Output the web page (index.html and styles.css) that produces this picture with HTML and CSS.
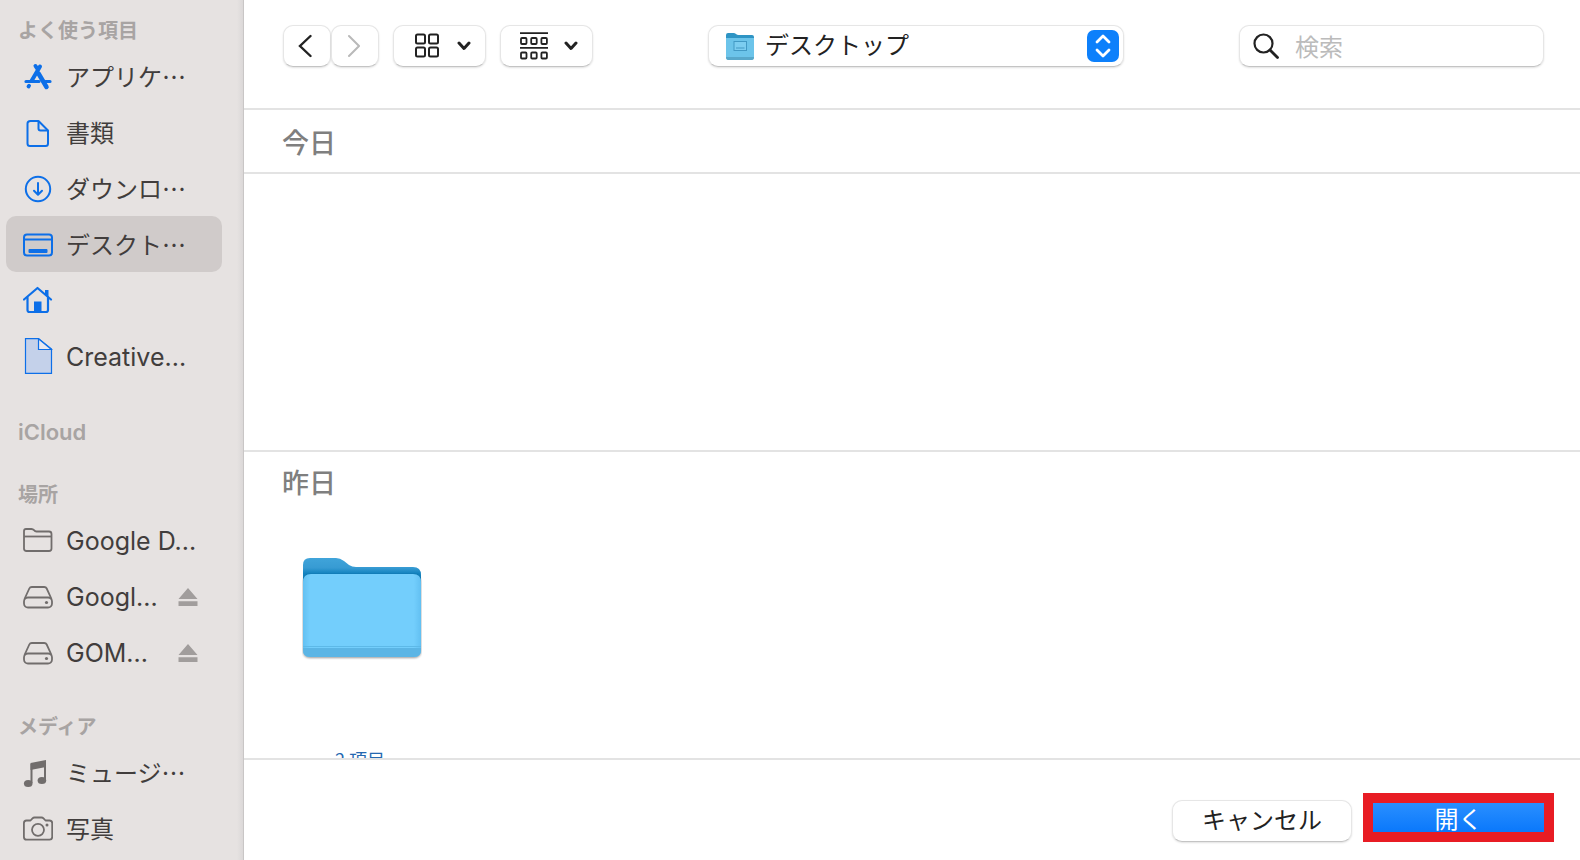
FILE: index.html
```html
<!doctype html>
<html lang="ja">
<head>
	<meta charset="UTF-8">
	<meta name="viewport" content="width=device-width, initial-scale=1">
	<title>デスクトップ</title>
	<link rel="stylesheet" href="styles.css">
</head>
<body>
	<div class="dialog">
		<nav class="sidebar">
			<h2>よく使う項目</h2>
			<ul>
				<li>
					<a href="#">
						<svg class="icon blue" viewBox="0 0 30 36"><g fill="none" stroke="currentColor" stroke-width="4" stroke-linecap="round"><path d="M17 8.500L8.500 23M12.500 8l2 3"/><path d="M15.500 15.500L23.500 29" stroke-width="4.500"/><path d="M3 23.500H16M22.500 23.500h4.500" stroke-width="3.200"/><path d="M5.500 28.500l.6-.8" stroke-width="3.800"/></g></svg>
						<span>アプリケ…</span>
					</a>
				</li>
				<li>
					<a href="#">
						<svg class="icon blue" viewBox="0 0 30 36"><g fill="none" stroke="currentColor" stroke-width="2" stroke-linejoin="round"><path d="M7.500 7H15.500L25 16.500V29.500Q25 32 22.500 32H7Q4.500 32 4.500 29.500V9.500Q4.500 7 7.500 7Z"/><path d="M15.500 7V14.500Q15.500 16.500 17.500 16.500H25"/></g></svg>
						<span>書類</span>
					</a>
				</li>
				<li>
					<a href="#">
						<svg class="icon blue" viewBox="0 0 30 36"><g fill="none" stroke="currentColor" stroke-width="2" stroke-linecap="round" stroke-linejoin="round"><circle cx="15" cy="19" r="12.200"/><path d="M15 13V24.500M11 20.800L15 24.800L19 20.800"/></g></svg>
						<span>ダウンロ…</span>
					</a>
				</li>
				<li>
					<a class="current" href="#">
						<svg class="icon blue" viewBox="0 0 30 36"><g fill="none" stroke="currentColor" stroke-width="2"><rect x="1" y="8.500" width="28" height="21" rx="3"/><path d="M1 13.500H29"/></g><rect x="5.500" y="23" width="19" height="4" rx="1" fill="currentColor"/></svg>
						<span>デスクト…</span>
					</a>
				</li>
				<li>
					<a href="#" aria-label="ホーム">
						<svg class="icon blue" viewBox="0 0 30 36"><g fill="none" stroke="currentColor" stroke-width="2.200" stroke-linejoin="round" stroke-linecap="round"><path d="M1 17.500L14.500 6L28 17.500"/><path d="M4.500 15.500V28Q4.500 30 6.500 30H23Q25 30 25 28V15.500"/></g><path d="M22 8H25.500V15L22 12Z" fill="currentColor"/><path d="M11 30V19.500H18.500V30Z" fill="currentColor"/></svg>
					</a>
				</li>
				<li>
					<a class="latin" href="#">
						<svg class="icon blue" viewBox="0 0 30 36"><path d="M2.500 .7H15.500L28.500 11V35.300H2.500Z" fill="#c4d1ea" stroke="currentColor" stroke-width="1.200"/><path d="M15.500 .7V11.500H28.500Z" fill="#e6e8f0" stroke="currentColor" stroke-width="1.200"/></svg>
						<span>Creative...</span>
					</a>
				</li>
			</ul>
			<h2 class="latin">iCloud</h2>
			<h2>場所</h2>
			<ul>
				<li>
					<a class="latin" href="#">
						<svg class="icon" viewBox="0 0 30 36"><g fill="none" stroke="currentColor" stroke-width="1.800" stroke-linejoin="round"><path d="M1 27V9Q1 7 3 7H8.500Q10 7 11 8.200T13.500 9.500H26Q28.500 9.500 28.500 12V26.500Q28.500 29 26 29H3.500Q1 29 1 26.500Z"/><path d="M1 14.500H28.500"/></g></svg>
						<span>Google D...</span>
					</a>
				</li>
				<li>
					<a class="latin" href="#">
						<svg class="icon" viewBox="0 0 30 36"><g fill="none" stroke="currentColor" stroke-width="1.800" stroke-linejoin="round"><path d="M1.500 21L6.300 10.500Q7 9 8.800 9H21.200Q23 9 23.700 10.500L28.500 21"/><rect x="1" y="19.500" width="28" height="10" rx="4"/></g><circle cx="23.500" cy="24.500" r="1.600" fill="currentColor"/></svg>
						<span>Googl...</span>
					</a>
					<button class="eject" type="button" aria-label="取り出す"><svg viewBox="0 0 20 20"><path d="M10 1L19.500 12H.5ZM.5 14.200H19.500V19H.5Z" fill="currentColor"/></svg></button>
				</li>
				<li>
					<a class="latin" href="#">
						<svg class="icon" viewBox="0 0 30 36"><g fill="none" stroke="currentColor" stroke-width="1.800" stroke-linejoin="round"><path d="M1.500 21L6.300 10.500Q7 9 8.800 9H21.200Q23 9 23.700 10.500L28.500 21"/><rect x="1" y="19.500" width="28" height="10" rx="4"/></g><circle cx="23.500" cy="24.500" r="1.600" fill="currentColor"/></svg>
						<span>GOM...</span>
					</a>
					<button class="eject" type="button" aria-label="取り出す"><svg viewBox="0 0 20 20"><path d="M10 1L19.500 12H.5ZM.5 14.200H19.500V19H.5Z" fill="currentColor"/></svg></button>
				</li>
			</ul>
			<h2>メディア</h2>
			<ul>
				<li>
					<a href="#">
						<svg class="icon" viewBox="0 0 30 36"><path d="M7.500 9L23 6V13L7.500 16Z" fill="currentColor"/><path d="M8.500 10V29M22 7V26" fill="none" stroke="currentColor" stroke-width="2"/><ellipse cx="5.200" cy="29.500" rx="4.300" ry="3.500" fill="currentColor"/><ellipse cx="18.900" cy="26.500" rx="4.300" ry="3.500" fill="currentColor"/></svg>
						<span>ミュージ…</span>
					</a>
				</li>
				<li>
					<a href="#">
						<svg class="icon" viewBox="0 0 30 36"><g fill="none" stroke="currentColor" stroke-width="1.800" stroke-linejoin="round"><path d="M3.500 10.500H7.500L9.500 8.300Q10.300 7.500 11.500 7.500H18.500Q19.700 7.500 20.500 8.300L22.500 10.500H26.500Q29.200 10.500 29.200 13.200V27Q29.200 29.700 26.500 29.700H3.500Q.9 29.700 .9 27V13.200Q.9 10.500 3.500 10.500Z"/><circle cx="15" cy="19.800" r="6"/></g><circle cx="24" cy="15" r="1.500" fill="currentColor"/></svg>
						<span>写真</span>
					</a>
				</li>
			</ul>
		</nav>
		<main class="content">
			<header class="toolbar">
				<div class="tools">
					<div class="history">
						<button class="control" type="button" aria-label="戻る"><svg viewBox="0 0 14 24"><path d="M12.500 2L2 12L12.500 22" fill="none" stroke="#222" stroke-width="2.400" stroke-linecap="round"/></svg></button>
						<button class="control" type="button" aria-label="進む" disabled><svg viewBox="0 0 14 24"><path d="M3 2L13 12L3 22" fill="none" stroke="#b9b9b9" stroke-width="2" stroke-linecap="round"/></svg></button>
					</div>
					<button class="control view" type="button" aria-label="アイコン表示">
						<svg viewBox="0 0 28 28"><g fill="none" stroke="#222" stroke-width="2"><rect x="3" y="2.500" width="9" height="9" rx="1.500"/><rect x="16" y="2.500" width="9" height="9" rx="1.500"/><rect x="3" y="15.500" width="9" height="9" rx="1.500"/><rect x="16" y="15.500" width="9" height="9" rx="1.500"/></g></svg>
						<svg class="chevron" viewBox="0 0 14 10"><path d="M2 2L7 7.500L12 2" fill="none" stroke="#222" stroke-width="3" stroke-linecap="round" stroke-linejoin="round"/></svg>
					</button>
					<button class="control view" type="button" aria-label="グループ分け">
						<svg viewBox="0 0 28 28"><g fill="none" stroke="#222" stroke-width="1.800"><path d="M0 1.200H28M0 15.800H28"/><rect x="1" y="6" width="5.500" height="6" rx="1"/><rect x="11.200" y="6" width="5.500" height="6" rx="1"/><rect x="21.400" y="6" width="5.500" height="6" rx="1"/><rect x="1" y="20.500" width="5.500" height="6" rx="1"/><rect x="11.200" y="20.500" width="5.500" height="6" rx="1"/><rect x="21.400" y="20.500" width="5.500" height="6" rx="1"/></g></svg>
						<svg class="chevron" viewBox="0 0 14 10"><path d="M2 2L7 7.500L12 2" fill="none" stroke="#222" stroke-width="3" stroke-linecap="round" stroke-linejoin="round"/></svg>
					</button>
				</div>
				<div class="location">
					<svg class="location-folder" viewBox="0 0 30 28">
						<path d="M1 3Q1 1 3 1H8.500Q10 1 11 2T13.500 3H27Q29 3 29 5V10H1Z" fill="#2e94c4"/>
						<path d="M1 6H29V25.500Q29 27.500 27 27.500H3Q1 27.500 1 25.500Z" fill="#6cc4ea"/>
						<path d="M1 25H29Q29 28 27 28H3Q1 28 1 25Z" fill="#58a8cb"/>
						<rect x="9" y="9.500" width="12.500" height="9" fill="#7ccdf0" stroke="#4299c4"/>
						<path d="M11 16H19.500" stroke="#4299c4"/>
					</svg>
					<select aria-label="場所">
						<option>デスクトップ</option>
					</select>
					<svg class="stepper" viewBox="0 0 32 32"><rect width="32" height="32" rx="7" fill="#0d80fb"/><path d="M10 12L16 6L22 12M10 20L16 26L22 20" fill="none" stroke="#fff" stroke-width="2.800" stroke-linecap="round" stroke-linejoin="round"/></svg>
				</div>
				<label class="search">
					<svg viewBox="0 0 26 26"><g fill="none" stroke="#222" stroke-width="2.200" stroke-linecap="round"><circle cx="10.500" cy="10.500" r="9"/><path d="M17 17L24.500 24.500" stroke-width="2.800"/></g></svg>
					<input type="search" placeholder="検索" aria-label="検索">
				</label>
			</header>
			<section class="group today">
				<h1>今日</h1>
			</section>
			<section class="group yesterday">
				<h1>昨日</h1>
				<div class="file">
					<svg class="folder" viewBox="0 0 120 104">
						<defs>
							<linearGradient id="back" x1="0" y1="0" x2="0" y2="1">
								<stop offset="0" stop-color="#40a4da"/>
								<stop offset=".25" stop-color="#379bd3"/>
								<stop offset=".4" stop-color="#1282be"/>
							</linearGradient>
							<linearGradient id="side" x1="0" y1="0" x2="1" y2="0">
								<stop offset="0" stop-color="#62c0f2"/>
								<stop offset=".06" stop-color="#73cefc"/>
								<stop offset=".94" stop-color="#73cefc"/>
								<stop offset="1" stop-color="#62c0f2"/>
							</linearGradient>
						</defs>
						<path d="M1 8Q1 1 8 1H34Q38 1 42 4L47 8Q50 10 54 10H111Q119 10 119 18V40H1Z" fill="url(#back)"/>
						<path class="folder-front" d="M1 25Q1 17 9 17H111Q119 17 119 25V93Q119 100 112 100H8Q1 100 1 93Z" fill="url(#side)"/>
						<path d="M1 91H119V93Q119 100 112 100H8Q1 100 1 93Z" fill="#5bb5e5"/>
						<path d="M1 89.500H119" stroke="#5db9e8"/>
					</svg>
					<span class="count">2 項目</span>
				</div>
			</section>
			<footer class="actions">
				<button class="control cancel" type="button">キャンセル</button>
				<button class="open" type="button">開く</button>
			</footer>
		</main>
	</div>
</body>
</html>
```
FILE: styles.css
```css
* { box-sizing: border-box; }
body { margin: 0; background: #fff; color: #222; font-family: "Noto Sans CJK JP", sans-serif; font-size: 24px; line-height: 36px; }
button,input,select { padding: 0; border: 0; background: none; color: inherit; font: inherit; }
h1,h2,ul { margin: 0; padding: 0; list-style: none; }
svg { display: block; flex: none; }
.latin { font-family: Inter, "Liberation Sans", sans-serif; }
.dialog { display: flex; height: 100vh; min-height: 640px; }

.sidebar { flex: none; width: 244px; padding: 12px 21px 0 6px; overflow: hidden; border-right: 1px solid #c9c6c6; background: linear-gradient(to left, #dbd8d8, #e6e2e1 6px); }
.sidebar h2 { padding-left: 12px; color: #a8a4a3; font-size: 20px; font-weight: 600; line-height: 36px; }
.sidebar h2.latin { padding-top: 2px; font-size: 22px; }
.sidebar ul + h2 { margin-top: 28px; }
.sidebar h2 + h2 { margin-top: 26px; }
.sidebar li { display: flex; align-items: center; }
.sidebar a { display: flex; flex: 1; align-items: center; gap: 13px; height: 56px; padding-left: 17px; border-radius: 10px; color: #413d3c; text-decoration: none; white-space: nowrap; }
.sidebar a.latin { font-size: 25px; }
.sidebar a.latin span { padding-top: 2px; }
.sidebar a.current { background: #d0cbca; }
.icon { width: 30px; height: 36px; color: #716d6c; }
.icon.blue { color: #0d6fe8; }
.eject { margin: 2px 24px 0 0; color: #a19d9c; }
.eject svg { width: 20px; height: 20px; }

.content { display: flex; flex: 1; flex-direction: column; min-width: 0; }
.toolbar { display: flex; flex: none; justify-content: space-between; gap: 16px; padding: 25px 36px 41px 39px; }
.tools { display: flex; gap: 14px; }
.history { display: flex; }
.control,.location,.search { display: flex; align-items: center; justify-content: center; height: 42px; border: 1px solid #e6e6e6; border-bottom-color: #c4c4c4; border-radius: 10px; background: #fff; box-shadow: 0 1px 2px rgba(0,0,0,.12); }
.history .control { width: 48px; padding-right: 4px; }
.history svg { width: 14px; height: 24px; }
.view { gap: 16px; width: 93px; padding-left: 4px; }
.view svg { width: 28px; height: 28px; }
.view .chevron { width: 14px; height: 10px; }
.location { position: relative; flex: 0 1 416px; }
.location select { width: 100%; height: 40px; padding: 0 48px 4px 56px; border-radius: 10px; appearance: none; }
.location-folder { position: absolute; left: 16px; width: 30px; height: 28px; pointer-events: none; }
.stepper { position: absolute; right: 4px; width: 32px; height: 32px; pointer-events: none; }
.search { flex: 0 1 305px; justify-content: flex-start; gap: 16px; min-width: 0; padding: 0 13px; }
.search svg { width: 26px; height: 26px; }
.search input { flex: 1; min-width: 0; outline: 0; appearance: none; }
.search input::placeholder { color: #bbb; opacity: 1; }

.group { border-top: 2px solid #e3e3e3; }
.group h1 { padding-left: 38px; color: #7f7f7f; font-size: 27px; font-weight: 500; line-height: 60px; }
.today { flex: none; height: 342px; }
.today h1 { padding-top: 2px; border-bottom: 2px solid #e3e3e3; }
.yesterday { flex: 1; min-height: 0; overflow: hidden; }
.file { display: flex; flex-direction: column; align-items: center; gap: 86px; width: 144px; margin-left: 46px; padding-top: 45px; }
.folder { width: 120px; height: 104px; }
.folder-front { filter: drop-shadow(0 1px 1px rgba(0,0,0,.4)); }
.count { padding-right: 4px; color: #2468b0; font-size: 18px; line-height: 24px; }
.actions { display: flex; flex: none; align-items: flex-end; justify-content: flex-end; gap: 11px; height: 102px; padding: 0 26px 18px 0; border-top: 2px solid #e3e3e3; }
.cancel { width: 180px; padding-bottom: 4px; }
.open { width: 191px; height: 49px; border: 10px solid #e81c24; background: linear-gradient(#2a8fff, #0a78fb) padding-box; color: #fff; line-height: 29px; }
```
